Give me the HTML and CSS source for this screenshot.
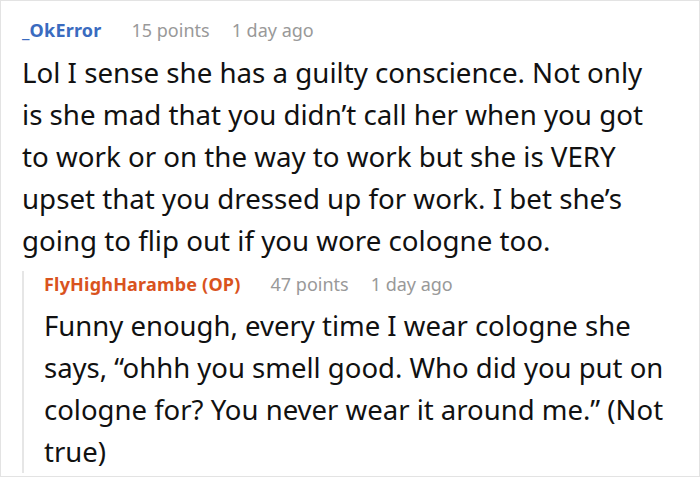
FILE: index.html
```html
<!DOCTYPE html>
<html>
<head>
<meta charset="utf-8">
<link rel="stylesheet" href="styles.css">
</head>
<body>
<div class="frame">
  <div class="comment">
    <div class="meta">
      <span class="user user-blue">_OkError</span>
      <span class="info">15 points</span>
      <span class="info">1 day ago</span>
    </div>
    <p class="text text-main">Lol I sense she has a guilty conscience. Not only is she mad that you didn’t call her when you got to work or on the way to work but she is VERY upset that you dressed up for work. I bet she’s going to flip out if you wore cologne too.</p>
    <div class="reply">
      <div class="meta">
        <span class="user user-orange">FlyHighHarambe (OP)</span>
        <span class="info">47 points</span>
        <span class="info">1 day ago</span>
      </div>
      <p class="text text-reply">Funny enough, every time I wear cologne she says, “ohhh you smell good. Who did you put on cologne for? You never wear it around me.” (Not true)</p>
    </div>
  </div>
</div>
</body>
</html>
```
FILE: styles.css
```css
html, body {
  margin: 0;
  padding: 0;
  background: #fff;
}
.frame {
  box-sizing: border-box;
  width: 700px;
  height: 477px;
  border: 1px solid #e3e3e3;
  overflow: hidden;
  font-family: "Noto Sans", sans-serif;
}
.comment {
  padding: 16px 19px 0 21px;
}
.meta {
  display: flex;
  gap: 22px;
  align-items: baseline;
  font-size: 18px;
  line-height: 26px;
}
.user {
  font-weight: 700;
  margin-right: 8px;
  letter-spacing: 0.2px;
}
.user-blue { color: #3a6bbf; }
.user-orange { color: #d9531e; }
.info {
  color: #999;
}
.text {
  margin: 8px 0 0;
  line-height: 42px;
  color: #111;
}
.text-main {
  font-size: 27.7px;
  padding-right: 28px;
}
.text-reply {
  font-size: 27.5px;
}
.reply {
  margin-top: 10px;
  border-left: 2px solid #e6e6e6;
  padding-left: 20px;
}
```
